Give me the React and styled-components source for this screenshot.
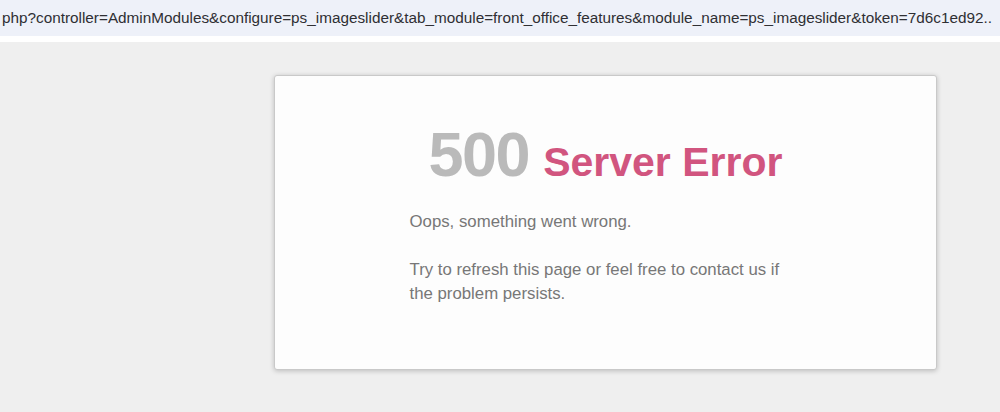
import React from "react";
import styled, { createGlobalStyle } from "styled-components";

const GlobalStyle = createGlobalStyle`
  html, body {
    margin: 0;
    padding: 0;
    background: #efefef;
    font-family: "Liberation Sans", Arial, sans-serif;
  }
`;

const Page = styled.div`
  display: flex;
  flex-direction: column;
  height: 412px;
  overflow: hidden;
  background: #efefef;
`;

const UrlBar = styled.div`
  height: 36px;
  background: #eef1f9;
  border-bottom: 6px solid #ffffff;
  display: flex;
  align-items: center;
  padding-left: 2px;
  font-size: 15.3px;
  color: #2f2f33;
  white-space: nowrap;
  overflow: hidden;
`;

const Main = styled.main`
  padding: 33px 0 0 274px;
`;

const Card = styled.section`
  width: 663px;
  box-sizing: border-box;
  background: #fdfdfd;
  border: 1px solid #c9c9c9;
  border-radius: 3px;
  box-shadow: 0 1px 5px rgba(0, 0, 0, 0.22);
  padding: 41px 0 63px;
  display: flex;
  flex-direction: column;
  align-items: center;
`;

const Heading = styled.h1`
  margin: 0;
  display: flex;
  align-items: baseline;
  gap: 14px;
  font-weight: 700;
  line-height: 1.2;
`;

const Code = styled.span`
  font-size: 63px;
  color: #bababa;
  letter-spacing: -1.5px;
`;

const Title = styled.span`
  font-size: 41px;
  color: #d1557f;
`;

const Body = styled.div`
  width: 392px;
  margin-top: 17px;
  font-size: 16.8px;
  line-height: 24px;
  color: #777777;

  p {
    margin: 0;
  }
  p + p {
    margin-top: 24px;
  }
`;

export default function App() {
  return (
    <Page>
      <GlobalStyle />
      <UrlBar>
        php?controller=AdminModules&amp;configure=ps_imageslider&amp;tab_module=front_office_features&amp;module_name=ps_imageslider&amp;token=7d6c1ed92..
      </UrlBar>
      <Main>
        <Card>
          <Heading>
            <Code>500</Code>
            <Title>Server Error</Title>
          </Heading>
          <Body>
            <p>Oops, something went wrong.</p>
            <p>Try to refresh this page or feel free to contact us if the problem persists.</p>
          </Body>
        </Card>
      </Main>
    </Page>
  );
}
